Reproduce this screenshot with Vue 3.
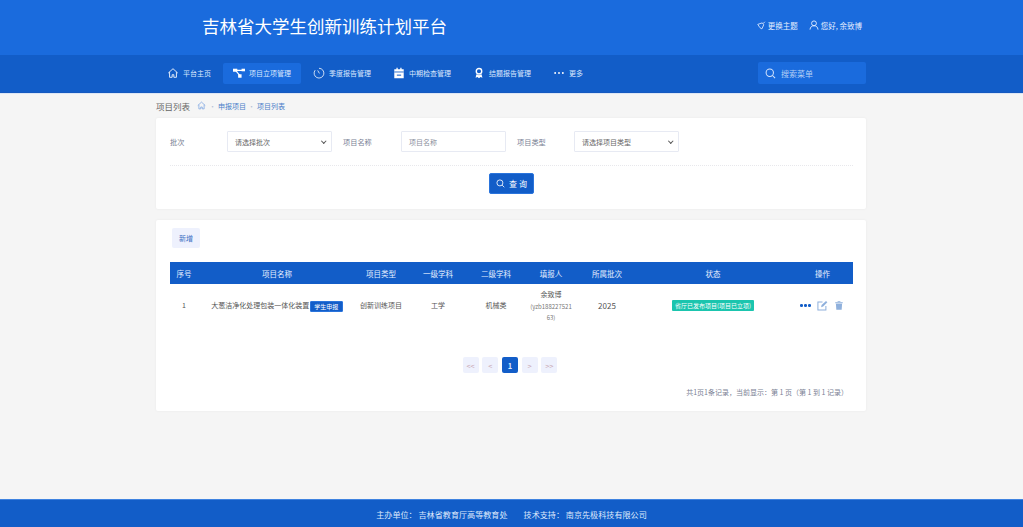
<template>
  <div class="page">
    <header class="top">
      <h1 class="site-title">吉林省大学生创新训练计划平台</h1>
      <div class="top-links">
        <span class="top-link">
          <svg class="ic-theme" viewBox="0 0 12 12" fill="none" stroke="currentColor" stroke-width="1.100">
            <path d="M1 4.500 7 2.500l2 2.500-2.500 5.500-2.500-1.500z" />
            <path d="M8 3.500 10.500 1" />
          </svg>
          更换主题
        </span>
        <span class="top-link user">
          <svg class="ic-user" viewBox="0 0 12 12" fill="none" stroke="currentColor" stroke-width="1.100">
            <circle cx="6" cy="4" r="2.900" />
            <path d="M1.200 11.500c.3-3 2-4.600 4.800-4.600s4.500 1.600 4.800 4.600" />
          </svg>
          您好, 余致博
        </span>
      </div>
    </header>

    <nav class="nav">
      <div class="nav-items">
        <a v-for="item in navItems" :key="item.label" class="nav-item" :class="{ active: item.active }">
          <svg class="nav-icon" viewBox="0 0 14 14" v-html="item.icon"></svg>
          <span>{{ item.label }}</span>
        </a>
      </div>
      <div class="nav-search">
        <svg class="search-icon" viewBox="0 0 12 12" fill="none" stroke="currentColor" stroke-width="1.100">
          <circle cx="5.200" cy="5.200" r="4" />
          <path d="M8.200 8.200 11 11" />
        </svg>
        <span>搜索菜单</span>
      </div>
    </nav>

    <main class="main">
      <div class="crumbs">
        <span class="crumbs-title">项目列表</span>
        <svg class="crumbs-home" viewBox="0 0 12 12" fill="none" stroke="currentColor" stroke-width="0.900">
          <path d="M1 6 6 1.500 11 6M2.500 5v5.500h2.500V8h2v2.500h2.500V5" />
        </svg>
        <span class="crumbs-dot">·</span>
        <span>申报项目</span>
        <span class="crumbs-dot">·</span>
        <span>项目列表</span>
      </div>

      <section class="card filter">
        <div class="filter-row">
          <label class="f-label f-batch">批次</label>
          <div class="f-select">请选择批次<i class="caret"></i></div>
          <label class="f-label f-name">项目名称</label>
          <div class="f-input">项目名称</div>
          <label class="f-label f-type">项目类型</label>
          <div class="f-select">请选择项目类型<i class="caret"></i></div>
        </div>
        <div class="filter-actions">
          <button class="btn-query">
            <svg viewBox="0 0 12 12" fill="none" stroke="currentColor" stroke-width="1.100">
              <circle cx="5.200" cy="5.200" r="4" />
              <path d="M8.200 8.200 11 11" />
            </svg>
            查 询
          </button>
        </div>
      </section>

      <section class="card list">
        <button class="btn-add">新增</button>
        <table class="grid">
          <colgroup>
            <col v-for="(w, i) in colWidths" :key="i" :style="{ width: w + 'px' }" />
          </colgroup>
          <thead>
            <tr>
              <th v-for="h in headers" :key="h">{{ h }}</th>
            </tr>
          </thead>
          <tbody>
            <tr>
              <td>1</td>
              <td class="name-cell">大葱洁净化处理包装一体化装置 <span class="tag-blue">学生申报</span></td>
              <td>创新训练项目</td>
              <td>工学</td>
              <td>机械类</td>
              <td>
                余致博
                <div class="account">(yzb188227521<br />63)</div>
              </td>
              <td class="year">2025</td>
              <td><span class="tag-green">省厅已发布项目(项目已立项)</span></td>
              <td>
                <div class="ops">
                  <span class="op-more"><i></i><i></i><i></i></span>
                  <svg class="op-icon op-edit" viewBox="0 0 12 12" fill="none" stroke="currentColor" stroke-width="1.100">
                    <path d="M9.700 6.500v4.500H1V2.300h5" />
                    <path d="M4.500 7.800 5 5.500 9.800 1 11.300 2.400 6.700 7.200z" fill="currentColor" stroke="none" />
                  </svg>
                  <svg class="op-icon" viewBox="0 0 12 12" fill="currentColor">
                    <path d="M1.500 2.200h9v1h-9zM4.300 1h3.400v.8H4.300zM2.300 3.800h7.400l-.5 7.200H2.800z" />
                  </svg>
                </div>
              </td>
            </tr>
          </tbody>
        </table>

        <div class="pager">
          <span class="pg">&lt;&lt;</span>
          <span class="pg">&lt;</span>
          <span class="pg current">1</span>
          <span class="pg">&gt;</span>
          <span class="pg">&gt;&gt;</span>
        </div>
        <div class="summary">共1页1条记录，当前显示：第 1 页（第 1 到 1 记录）</div>
      </section>
    </main>

    <footer class="foot">
      <span>主办单位：&nbsp;吉林省教育厅高等教育处</span>
      <span>技术支持：&nbsp;南京先极科技有限公司</span>
    </footer>
  </div>
</template>

<script setup>
const navItems = [
  {
    label: '平台主页',
    icon: '<path d="M1.500 7 7 2l5.500 5M3 6v6h3V9h2v3h3V6" fill="none" stroke="currentColor" stroke-width="1"/>'
  },
  {
    label: '项目立项管理',
    active: true,
    icon: '<path d="M3 4h8M3 4l5 6" fill="none" stroke="currentColor" stroke-width="1.300"/><rect x="0" y="2" width="5" height="3.500" fill="currentColor"/><rect x="10" y="2" width="4" height="3" fill="currentColor"/><rect x="6" y="8.500" width="4" height="4" fill="currentColor"/>'
  },
  {
    label: '季度报告管理',
    icon: '<path d="M7 1.500a5.700 5.700 0 1 1-4.500 2.200" fill="none" stroke="currentColor" stroke-width="0.900"/><path d="M5.500 4 7.500 7.500" stroke="currentColor" stroke-width="0.900"/>'
  },
  {
    label: '中期检查管理',
    icon: '<path d="M1.500 2.500h11v10.500h-11zM4 1h1.500v2H4zM8.500 1H10v2H8.500z" fill="currentColor"/><path d="M1.500 5.800h11" stroke="#125dc8" stroke-width="1"/><path d="M4.500 9.500h5" stroke="#125dc8" stroke-width="1.200"/>'
  },
  {
    label: '结题报告管理',
    icon: '<circle cx="7" cy="5" r="3.200" fill="none" stroke="currentColor" stroke-width="1.600"/><path d="M4 8.500 3 12.500l2.200-.8L7 13l1.800-1.300 2.200.8-1-4-3 1z" fill="currentColor"/>'
  },
  {
    label: '更多',
    icon: '<circle cx="2.500" cy="7" r="1.100" fill="currentColor"/><circle cx="7" cy="7" r="1.100" fill="currentColor"/><circle cx="11.500" cy="7" r="1.100" fill="currentColor"/>'
  }
]

const headers = ['序号', '项目名称', '项目类型', '一级学科', '二级学科', '填报人', '所属批次', '状态', '操作']
const colWidths = [28, 158, 50, 64, 52, 58, 54, 158, 61]
</script>

<style>
html,
body {
  margin: 0;
  padding: 0;
  background: #f5f5f5;
}
</style>

<style scoped>
.page {
  width: 1023px;
  height: 527px;
  display: flex;
  flex-direction: column;
  overflow: hidden;
  background: #f5f5f5;
  font-family: "Noto Sans CJK SC", "Liberation Sans", sans-serif;
  font-size: 7px;
  color: #555;
}

.top {
  height: 55px;
  flex: none;
  background: #1a6bdd;
  color: #fff;
  display: flex;
  align-items: center;
  justify-content: space-between;
  padding: 0 161px 0 202px;
}

.site-title {
  margin: 0 0 3px;
  font-size: 17.500px;
  font-weight: 400;
  line-height: 26px;
}

.top-links {
  display: flex;
  gap: 11px;
  margin-bottom: 5px;
  font-size: 7.500px;
  color: #e6efff;
}

.top-link {
  display: flex;
  align-items: center;
  gap: 2px;
}

.ic-theme {
  width: 9px;
  height: 9px;
}

.ic-user {
  width: 10px;
  height: 12px;
}

.nav {
  height: 38px;
  flex: none;
  box-sizing: border-box;
  background: #125dc8;
  border-bottom: 1px solid #1559c0;
  display: flex;
  align-items: center;
  justify-content: space-between;
  padding: 0 157px 1px 157px;
  color: #dbe8fd;
}

.nav-items {
  display: flex;
  align-items: center;
  gap: 2px;
}

.nav-item {
  display: flex;
  align-items: center;
  gap: 4px;
  height: 21px;
  padding: 0 10px;
  border-radius: 2px;
  white-space: nowrap;
}

.nav-item.active {
  background: #1a6bdd;
}

.nav-icon {
  width: 12px;
  height: 12px;
  color: #fff;
}

.nav-search {
  width: 108px;
  height: 22px;
  box-sizing: border-box;
  background: #1a6bdd;
  border-radius: 2px;
  display: flex;
  align-items: center;
  gap: 5px;
  padding-left: 7px;
  font-size: 8px;
  color: #b5cff5;
}

.search-icon {
  width: 11px;
  height: 11px;
  color: #d8e6fc;
}

.main {
  flex: 1;
  padding: 0 157px 0 156px;
  box-shadow: inset 0 1px 0 #dce6f5;
}

.crumbs {
  height: 25px;
  display: flex;
  align-items: center;
  gap: 2px;
  color: #4a7ec9;
}

.crumbs-title {
  font-size: 8.500px;
  color: #666;
  margin-right: 5px;
}

.crumbs-home {
  width: 9px;
  height: 9px;
  margin-right: 1px;
  color: #6f9be0;
}

.crumbs-dot {
  color: #b5c2d6;
}

.card {
  background: #fff;
  border-radius: 2px;
  box-shadow: 0 0 3px rgba(0, 0, 0, 0.05);
}

.filter {
  height: 91px;
  box-sizing: border-box;
  padding: 13px 13px 0 14px;
}

.filter-row {
  display: flex;
  align-items: center;
  height: 21px;
  padding-bottom: 13px;
  box-sizing: content-box;
  border-bottom: 1px dotted #e8e8ec;
}

.f-label {
  color: #7a8194;
  font-size: 7.200px;
}

.f-batch {
  width: 57px;
}

.f-name {
  width: 58px;
  margin-left: 11px;
}

.f-type {
  width: 57px;
  margin-left: 11px;
}

.f-select,
.f-input {
  box-sizing: border-box;
  width: 105px;
  height: 21px;
  border: 1px solid #e7eaf3;
  border-radius: 1px;
  display: flex;
  align-items: center;
  padding-left: 7px;
  color: #666;
  position: relative;
}

.f-input {
  color: #8a8f9c;
}

.caret {
  position: absolute;
  right: 6px;
  top: 7px;
  width: 2.500px;
  height: 2.500px;
  border-right: 1px solid #555;
  border-bottom: 1px solid #555;
  transform: rotate(45deg);
}

.filter-actions {
  display: flex;
  justify-content: center;
  padding-top: 7px;
}

.btn-query {
  width: 45px;
  height: 21px;
  border: 1px solid #2a74dc;
  border-radius: 2px;
  background: #125dc8;
  color: #fff;
  font: inherit;
  font-size: 8px;
  display: flex;
  align-items: center;
  justify-content: center;
  gap: 4px;
  padding: 0;
}

.btn-query svg {
  width: 9px;
  height: 9px;
}

.list {
  height: 191px;
  margin-top: 11px;
  box-sizing: border-box;
  padding: 8px 13px 0 14px;
}

.btn-add {
  display: block;
  width: 28px;
  height: 20px;
  margin-left: 2px;
  border: none;
  border-radius: 2px;
  background: #eef1fd;
  color: #3a6fc4;
  font: inherit;
  padding: 0;
}

.grid {
  width: 683px;
  margin-top: 14px;
  border-collapse: collapse;
  table-layout: fixed;
  text-align: center;
}

.grid th {
  height: 22px;
  padding: 0;
  background: #125dc8;
  color: #e6efff;
  font-size: 7.500px;
  font-weight: 400;
}

.grid td {
  height: 43px;
  padding: 0;
  color: #555;
  line-height: 13px;
  vertical-align: middle;
}

.name-cell {
  white-space: nowrap;
}

.tag-blue {
  display: inline-block;
  width: 33px;
  height: 11px;
  border: 1px solid #2a74dc;
  box-sizing: border-box;
  background: #125dc8;
  color: #fff;
  font-size: 6px;
  line-height: 9px;
  border-radius: 1px;
  vertical-align: middle;
  margin-left: -1px;
}

.account {
  font-size: 6px;
  line-height: 11px;
  color: #777;
}

.year {
  font-size: 8px;
}

.tag-green {
  display: inline-block;
  width: 82px;
  height: 11px;
  background: #1bc5ae;
  color: #fff;
  font-size: 6px;
  line-height: 11px;
  border-radius: 1px;
  white-space: nowrap;
}

.ops {
  display: flex;
  align-items: center;
  justify-content: center;
  gap: 6px;
  margin-left: -1px;
}

.op-more {
  display: flex;
  gap: 1.500px;
}

.op-more i {
  width: 2.500px;
  height: 2.500px;
  border-radius: 50%;
  background: #125dc8;
}

.op-icon {
  width: 10px;
  height: 11px;
  color: #8fb0dc;
}

.op-edit {
  width: 11px;
}

.pager {
  display: flex;
  justify-content: center;
  gap: 3.700px;
  margin-top: 30px;
  margin-left: -3px;
}

.pg {
  width: 16px;
  height: 16px;
  border-radius: 2px;
  background: #eef1fd;
  color: #c9a8b4;
  font-size: 7.500px;
  display: flex;
  align-items: center;
  justify-content: center;
}

.pg.current {
  background: #125dc8;
  color: #dbe8fd;
  font-weight: 700;
}

.summary {
  margin-top: 14px;
  text-align: right;
  padding-right: 5px;
  color: #7a8194;
}

.foot {
  height: 28px;
  flex: none;
  box-sizing: border-box;
  background: #125dc8;
  border-top: 1px solid #3f83e0;
  padding-top: 1px;
  color: #dfeafc;
  font-size: 8.100px;
  display: flex;
  align-items: center;
  justify-content: center;
  gap: 16px;
}
</style>
